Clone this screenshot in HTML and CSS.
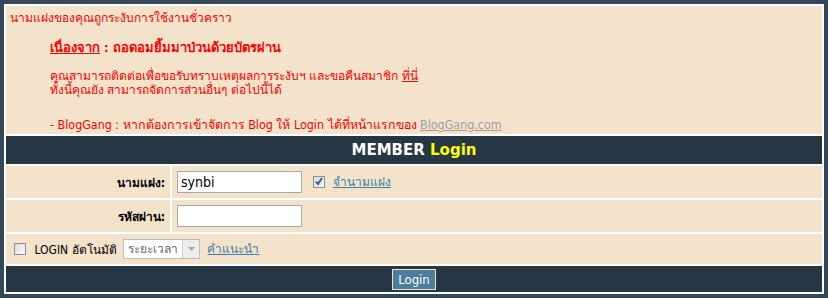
FILE: index.html
```html
<!DOCTYPE html>
<html lang="th">
<head>
    <meta charset="UTF-8">
    <title>BlogGang - Member Login</title>
    <link rel="stylesheet" href="styles.css">
</head>
<body>

    <table class="login-table">
        <tr>
            <td class="notice" colspan="2">
                <div class="notice-title">นามแฝงของคุณถูกระงับการใช้งานชั่วคราว</div>
                <div class="notice-body">
                    <div class="reason"><u>เนื่องจาก</u> : ถอดอมยิ้มมาป่วนด้วยบัตรผ่าน</div>
                    <div class="contact">
                        คุณสามารถติดต่อเพื่อขอรับทราบเหตุผลการระงับฯ และขอคืนสมาชิก <a href="#" class="red-link">ที่นี่</a><br>
                        ทั้งนี้คุณยัง สามารถจัดการส่วนอื่นๆ ต่อไปนี้ได้
                    </div>
                    <div class="blog-note">- BlogGang : หากต้องการเข้าจัดการ Blog ให้ Login ได้ที่หน้าแรกของ <a href="#" class="gray-link">BlogGang.com</a></div>
                </div>
            </td>
        </tr>
        <tr>
            <td class="head" colspan="2">MEMBER <span class="yellow">Login</span></td>
        </tr>
        <tr class="field-row">
            <td class="label">นามแฝง:</td>
            <td class="field">
                <input type="text" class="text-box" value="synbi">
                <input type="checkbox" class="check" checked>
                <a href="#" class="blue-link">จำนามแฝง</a>
            </td>
        </tr>
        <tr class="field-row">
            <td class="label">รหัสผ่าน:</td>
            <td class="field">
                <input type="password" class="text-box">
            </td>
        </tr>
        <tr>
            <td class="auto" colspan="2">
                <input type="checkbox" class="check">
                <span class="auto-text">LOGIN อัตโนมัติ</span>
                <span class="select-box">
                    <span class="select-text">ระยะเวลา</span>
                    <span class="select-arrow"><svg width="7" height="4" viewBox="0 0 7 4"><path d="M0 0h7L3.5 4z" fill="#a8a8a8"/></svg></span>
                </span>
                <a href="#" class="blue-link">คำแนะนำ</a>
            </td>
        </tr>
        <tr>
            <td class="foot" colspan="2"><button class="login-btn">Login</button></td>
        </tr>
    </table>

</body>
</html>
```

FILE: styles.css
```css
/* Page */
body {
    margin: 4px;
    background-color: #34485a;
    font-family: Tahoma, "DejaVu Sans Condensed", "DejaVu Sans", sans-serif;
    font-size: 12px;
    overflow: hidden;
}

/* Main table */
.login-table {
    width: 820px;
    background-color: #ffffff;
    border-spacing: 2px;
}

.login-table td {
    padding: 0;
    background-color: #f3e3ca;
}

/* Suspension notice */
.notice {
    height: 128px;
    vertical-align: top;
    color: #ff0000;
}

.notice-title {
    padding: 4px 0 0 4px;
    line-height: 16px;
}

.notice-body {
    padding-left: 44px;
}

.reason {
    margin-top: 14px;
    font-weight: bold;
    font-size: 13px;
    line-height: 16px;
}

.contact {
    margin-top: 13px;
    line-height: 14px;
}

.blog-note {
    margin-top: 20px;
    line-height: 16px;
    font-size: 12.4px;
}

.red-link {
    color: #ff0000;
}

.gray-link {
    color: #a0a0a0;
}

.blue-link {
    color: #3f7ea8;
    margin-left: 4px;
}

/* Header and footer bars */
.login-table td.head,
.login-table td.foot {
    background-color: #263743;
    text-align: center;
}

.head {
    height: 28px;
    color: #ffffff;
    font-family: Tahoma, "DejaVu Sans", sans-serif;
    font-weight: bold;
    font-size: 15px;
}

.yellow {
    color: #ffff00;
}

.foot {
    height: 26px;
}

.login-btn {
    background-color: #4d7c9c;
    color: #ffffff;
    border: 1px solid #f0e6b8;
    font-family: inherit;
    font-size: 13px;
    padding: 1px 5px;
    height: 21px;
    margin-top: 1px;
}

/* Form rows */
.field-row td {
    height: 32px;
}

.label {
    width: 159px;
    text-align: right;
    font-weight: bold;
    padding-right: 5px !important;
}

.field {
    padding-left: 5px !important;
}

.text-box {
    width: 125px;
    height: 22px;
    box-sizing: border-box;
    border: 1px solid #a9a9a9;
    padding: 1px 3px;
    font-family: inherit;
    font-size: 14px;
    vertical-align: middle;
}

/* Old style checkbox */
.check {
    appearance: none;
    width: 12px;
    height: 12px;
    margin: 0 0 0 8px;
    border: 1px solid #8e8f8f;
    background: linear-gradient(135deg, #dcdcdc, #f8f8f8);
    vertical-align: middle;
}

.check:checked {
    background-image: url("data:image/svg+xml,%3Csvg xmlns='http://www.w3.org/2000/svg' width='10' height='10' viewBox='0 0 10 10'%3E%3Cpath d='M2 4.5l2 2.5 4-6' fill='none' stroke='%23475a8a' stroke-width='2'/%3E%3C/svg%3E"), linear-gradient(135deg, #dcdcdc, #f8f8f8);
}

.auto {
    height: 30px;
}

.auto .check {
    margin-left: 8px;
}

.auto-text {
    margin-left: 5px;
    vertical-align: middle;
}

.select-box {
    display: inline-flex;
    align-items: stretch;
    height: 20px;
    box-sizing: border-box;
    border: 1px solid #bdbdbd;
    background-color: #ffffff;
    vertical-align: middle;
    margin-left: 3px;
}

.select-text {
    color: #6a6a6a;
    padding: 0 4px;
    line-height: 18px;
}

.select-arrow {
    width: 16px;
    display: flex;
    align-items: center;
    justify-content: center;
    background-color: #ececec;
    border-left: 1px solid #d0d0d0;
}
```
